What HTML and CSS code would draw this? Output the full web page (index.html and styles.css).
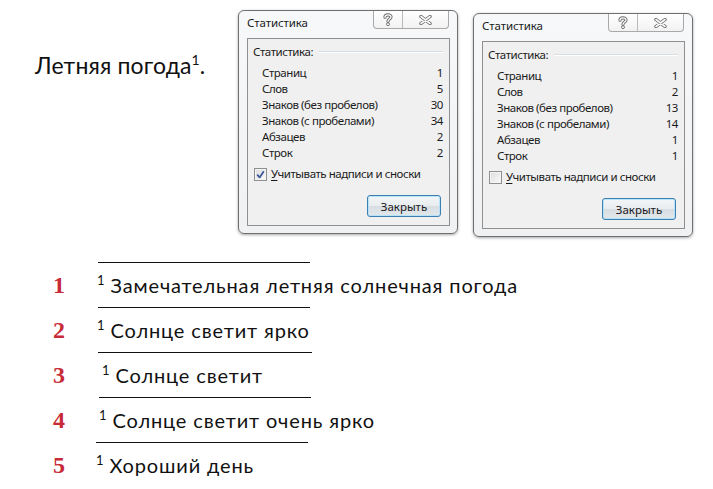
FILE: index.html
```html
<!DOCTYPE html>
<html lang="ru">
<head>
<meta charset="utf-8">
<title>Статистика</title>
<link rel="stylesheet" href="styles.css">
</head>
<body>
<div class="page">
  <div class="top">
    <div class="doc-title">Летняя погода<sup>1</sup>.</div>

    <div class="dialog d1">
      <div class="titlebar">
        <span class="caption">Статистика</span>
        <div class="tb-buttons">
          <span class="tb-btn help">
            <svg width="10" height="13" viewBox="0 0 10 13">
              <path d="M2 4.2 C2 1.2 8 1.2 8 4 C8 6 5 6 5 8.3" fill="none" stroke="#6a6a6a" stroke-width="3.2" stroke-linecap="round"/>
              <path d="M2 4.2 C2 1.2 8 1.2 8 4 C8 6 5 6 5 8.3" fill="none" stroke="#fbfbfb" stroke-width="1.4" stroke-linecap="round"/>
              <circle cx="5" cy="11.2" r="1.5" fill="#fbfbfb" stroke="#6a6a6a" stroke-width="0.9"/>
            </svg>
          </span>
          <span class="tb-btn close">
            <svg width="13" height="10" viewBox="0 0 13 10">
              <path d="M2 1.5 L11 8.5 M11 1.5 L2 8.5" fill="none" stroke="#6a6a6a" stroke-width="3.4" stroke-linecap="round"/>
              <path d="M2 1.5 L11 8.5 M11 1.5 L2 8.5" fill="none" stroke="#fbfbfb" stroke-width="1.6" stroke-linecap="round"/>
            </svg>
          </span>
        </div>
      </div>
      <div class="panel">
        <div class="group-head"><span>Статистика:</span><i class="groove"></i></div>
        <div class="stats">
          <div class="stat"><span>Страниц</span><span>1</span></div>
          <div class="stat"><span>Слов</span><span>5</span></div>
          <div class="stat"><span>Знаков (без пробелов)</span><span>30</span></div>
          <div class="stat"><span>Знаков (с пробелами)</span><span>34</span></div>
          <div class="stat"><span>Абзацев</span><span>2</span></div>
          <div class="stat"><span>Строк</span><span>2</span></div>
        </div>
        <div class="check">
          <span class="box checked">
            <svg width="9" height="9" viewBox="0 0 9 9"><path d="M1.2 4.6 L3.6 7.4 L7.8 1.2" fill="none" stroke="#3d5a98" stroke-width="1.8" stroke-linejoin="round"/></svg>
          </span>
          <span class="check-label"><u>У</u>читывать надписи и сноски</span>
        </div>
        <div class="actions"><span class="btn">Закрыть</span></div>
      </div>
    </div>

    <div class="dialog d2">
      <div class="titlebar">
        <span class="caption">Статистика</span>
        <div class="tb-buttons">
          <span class="tb-btn help">
            <svg width="10" height="13" viewBox="0 0 10 13">
              <path d="M2 4.2 C2 1.2 8 1.2 8 4 C8 6 5 6 5 8.3" fill="none" stroke="#6a6a6a" stroke-width="3.2" stroke-linecap="round"/>
              <path d="M2 4.2 C2 1.2 8 1.2 8 4 C8 6 5 6 5 8.3" fill="none" stroke="#fbfbfb" stroke-width="1.4" stroke-linecap="round"/>
              <circle cx="5" cy="11.2" r="1.5" fill="#fbfbfb" stroke="#6a6a6a" stroke-width="0.9"/>
            </svg>
          </span>
          <span class="tb-btn close">
            <svg width="13" height="10" viewBox="0 0 13 10">
              <path d="M2 1.5 L11 8.5 M11 1.5 L2 8.5" fill="none" stroke="#6a6a6a" stroke-width="3.4" stroke-linecap="round"/>
              <path d="M2 1.5 L11 8.5 M11 1.5 L2 8.5" fill="none" stroke="#fbfbfb" stroke-width="1.6" stroke-linecap="round"/>
            </svg>
          </span>
        </div>
      </div>
      <div class="panel">
        <div class="group-head"><span>Статистика:</span><i class="groove"></i></div>
        <div class="stats">
          <div class="stat"><span>Страниц</span><span>1</span></div>
          <div class="stat"><span>Слов</span><span>2</span></div>
          <div class="stat"><span>Знаков (без пробелов)</span><span>13</span></div>
          <div class="stat"><span>Знаков (с пробелами)</span><span>14</span></div>
          <div class="stat"><span>Абзацев</span><span>1</span></div>
          <div class="stat"><span>Строк</span><span>1</span></div>
        </div>
        <div class="check">
          <span class="box"></span>
          <span class="check-label"><u>У</u>читывать надписи и сноски</span>
        </div>
        <div class="actions"><span class="btn">Закрыть</span></div>
      </div>
    </div>
  </div>

  <div class="notes">
    <div class="note">
      <div class="rule"></div>
      <div class="row"><span class="num">1</span><span class="text"><sup>1</sup> Замечательная летняя солнечная погода</span></div>
    </div>
    <div class="note">
      <div class="rule"></div>
      <div class="row"><span class="num">2</span><span class="text"><sup>1</sup> Солнце светит ярко</span></div>
    </div>
    <div class="note n3">
      <div class="rule"></div>
      <div class="row"><span class="num">3</span><span class="text"><sup>1</sup> Солнце светит</span></div>
    </div>
    <div class="note n4">
      <div class="rule"></div>
      <div class="row"><span class="num">4</span><span class="text"><sup>1</sup> Солнце светит очень ярко</span></div>
    </div>
    <div class="note n5">
      <div class="rule"></div>
      <div class="row"><span class="num">5</span><span class="text"><sup>1</sup> Хороший день</span></div>
    </div>
  </div>
</div>
</body>
</html>
```

FILE: styles.css
```css
* { box-sizing: border-box; }

html, body {
  margin: 0;
  padding: 0;
  background: #ffffff;
}

.page {
  width: 713px;
  height: 489px;
  overflow: hidden;
}

/* ---------- top area ---------- */
.top {
  display: flex;
  align-items: flex-start;
  padding-left: 35px;
  height: 236px;
}

.doc-title {
  width: 203px;
  margin-top: 50px;
  font-family: Lato, "Open Sans", sans-serif;
  font-size: 23px;
  line-height: 30px;
  letter-spacing: 0.15px;
  color: #111;
}

.doc-title sup {
  font-size: 14px;
  vertical-align: 9px;
  line-height: 0;
}

/* ---------- dialog ---------- */
.dialog {
  width: 220px;
  border: 1px solid #6f6f6f;
  border-radius: 6px;
  background: linear-gradient(#f6f8fa, #eff1f3);
  box-shadow: 0 1px 3px rgba(0, 0, 0, 0.35);
  font-family: "Noto Sans", "Open Sans", sans-serif;
  font-size: 11.5px;
  letter-spacing: -0.45px;
  color: #1b1b1b;
}

.d1 { margin-top: 10px; }
.d2 { margin-top: 13px; margin-left: 15px; }

.titlebar {
  height: 27px;
  display: flex;
  align-items: flex-start;
  justify-content: space-between;
  padding-left: 8px;
  padding-right: 8px;
}

.caption {
  margin-top: 4px;
  font-size: 11.5px;
  line-height: 16px;
  letter-spacing: -0.1px;
}

.tb-buttons {
  display: flex;
  height: 18px;
  border: 1px solid #a9a9a9;
  border-top: none;
  border-radius: 0 0 4px 4px;
  background: linear-gradient(#ffffff, #f2f2f2);
}

.tb-btn {
  display: flex;
  align-items: center;
  justify-content: center;
  height: 17px;
}

.help {
  width: 29px;
  border-right: 1px solid #b9b9b9;
}

.close {
  width: 45px;
}

.panel {
  margin: 0 7px 7px 8px;
  border: 1px solid #8f8f8f;
  background: #f0f0f0;
  padding: 5px 6px 8px 5px;
}

.group-head {
  display: flex;
  align-items: center;
  height: 16px;
  line-height: 16px;
}

.groove {
  flex: 1;
  margin-left: 6px;
  height: 2px;
  border-top: 1px solid #d6dde3;
  border-bottom: 1px solid #ffffff;
}

.stats {
  margin-top: 5px;
  padding-left: 9px;
}

.stat {
  display: flex;
  justify-content: space-between;
  height: 16px;
  line-height: 16px;
}

.check {
  display: flex;
  align-items: center;
  margin-top: 5px;
  padding-left: 1px;
  height: 16px;
}

.box {
  width: 13px;
  height: 13px;
  border: 1px solid #8e8f8f;
  background: linear-gradient(135deg, #dcdcdc, #fbfbfb);
  box-shadow: inset 0 0 0 1px #f4f4f4;
  display: flex;
  align-items: center;
  justify-content: center;
}

.check-label {
  margin-left: 4px;
  line-height: 16px;
}

.check-label u {
  text-decoration-thickness: 1px;
  text-underline-offset: 2px;
}

.actions {
  display: flex;
  justify-content: flex-end;
  margin-top: 13px;
  padding-right: 2px;
}

.btn {
  width: 74px;
  height: 22px;
  display: flex;
  align-items: center;
  justify-content: center;
  border: 1px solid #3c7fb1;
  border-radius: 3px;
  background: linear-gradient(#f4f6f8 0%, #e8ecef 50%, #d7dde2 51%, #e2e7ea 100%);
  box-shadow: inset 0 0 0 1px rgba(170, 225, 250, 0.8);
  font-size: 11.5px;
  letter-spacing: 0;
  color: #1b1b1b;
}

/* ---------- footnote list ---------- */
.notes {
  margin-top: 26px;
  padding-left: 53px;
}

.rule {
  margin-left: 45px;
  width: 212px;
  border-top: 1px solid #111;
}

.row {
  display: flex;
  align-items: center;
  height: 44px;
}

.num {
  width: 44px;
  font-family: "Liberation Serif", serif;
  font-weight: bold;
  font-size: 24px;
  color: #c82b38;
}

.text {
  font-family: Lato, "Open Sans", sans-serif;
  font-size: 20px;
  letter-spacing: 0.85px;
  color: #111;
}

.text sup {
  font-size: 13px;
  vertical-align: 8px;
  line-height: 0;
  letter-spacing: 0;
}

.n3 .text { padding-left: 5px; }
.n3 .rule { width: 214px; }
.n4 .text { padding-left: 2px; }
.n4 .rule { margin-left: 46px; }
.n5 .text { margin-left: -1px; }
.n5 .rule { margin-left: 43px; }
```
